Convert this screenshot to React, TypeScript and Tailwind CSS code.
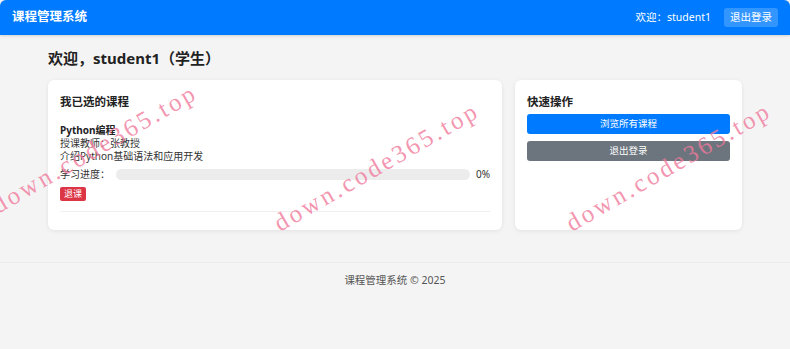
const marks = [
  'left-[-6px] top-[192px]',
  'left-[276px] top-[210px]',
  'left-[568px] top-[210px]',
];

export default function App() {
  return (
    <div
      className="relative min-h-[349px] bg-[#f4f4f4] text-[#333] overflow-hidden"
      style={{ fontFamily: '"Noto Sans", "Noto Sans CJK SC", sans-serif' }}
    >
      {/* Navbar */}
      <header className="h-[35px] bg-[#007bff] rounded-t-[6px] flex items-center justify-between px-3 text-white shadow-[0_1px_3px_rgba(0,0,0,0.15)]">
        <div className="text-[12.5px] font-bold">课程管理系统</div>
        <div className="flex items-center gap-[13px] text-[10.5px]">
          <span>欢迎：student1</span>
          <button className="bg-white/20 rounded-[3px] px-[6px] h-[19px] leading-[19px] text-[10.5px]">退出登录</button>
        </div>
      </header>

      {/* Main */}
      <main className="mx-[48px] pt-[14px] pb-[32px]">
        <h1 className="text-[15px] font-bold leading-[19px] mb-[12px] text-[#222]">欢迎，student1（学生）</h1>

        <div className="grid grid-cols-[454px_1fr] gap-[13px]">
          <section className="bg-white rounded-[6px] shadow-[0_1px_4px_rgba(0,0,0,0.08)] px-3 pt-[14px] pb-[18px] h-[150px]">
            <h2 className="text-[11.5px] font-bold leading-[15px] mb-[15px] text-[#222]">我已选的课程</h2>
            <div className="pb-[10px] border-b border-[#f0f0f0] text-[10px] leading-[13px]">
              <div className="font-bold text-[#222]">Python编程</div>
              <div>授课教师：张教授</div>
              <div>介绍Python基础语法和应用开发</div>
              <div className="flex items-center mt-[5px] h-[13px]">
                <span className="w-[56px] shrink-0">学习进度：</span>
                <div className="flex-1 h-[11px] rounded-full bg-[#ececec]" />
                <span className="ml-[6px] w-[14px]">0%</span>
              </div>
              <button className="mt-[6px] bg-[#dc3545] text-white text-[9px] leading-[14px] px-[4px] rounded-[2px]">退课</button>
            </div>
          </section>

          <section className="bg-white rounded-[6px] shadow-[0_1px_4px_rgba(0,0,0,0.08)] px-3 pt-[14px] h-[150px]">
            <h2 className="text-[11.5px] font-bold leading-[15px] mb-[5px] text-[#222]">快速操作</h2>
            <div className="flex flex-col gap-[7px]">
              <button className="h-[20px] bg-[#007bff] text-white text-[9.5px] rounded-[3px]">浏览所有课程</button>
              <button className="h-[20px] bg-[#6c757d] text-white text-[9.5px] rounded-[3px]">退出登录</button>
            </div>
          </section>
        </div>
      </main>

      {/* Footer */}
      <footer className="border-t border-[#ececec] pt-[10px] text-center text-[10.5px] text-[#555]">
        课程管理系统 © 2025
      </footer>

      {/* Watermarks */}
      {marks.map((pos) => (
        <div
          key={pos}
          className={`absolute ${pos} -rotate-[30deg] origin-left text-[25px] leading-[30px] tracking-[3px] text-[#f07a9c]/80 pointer-events-none whitespace-nowrap`}
          style={{ fontFamily: '"Liberation Serif", serif' }}
        >
          down.code365.top
        </div>
      ))}
    </div>
  );
}
